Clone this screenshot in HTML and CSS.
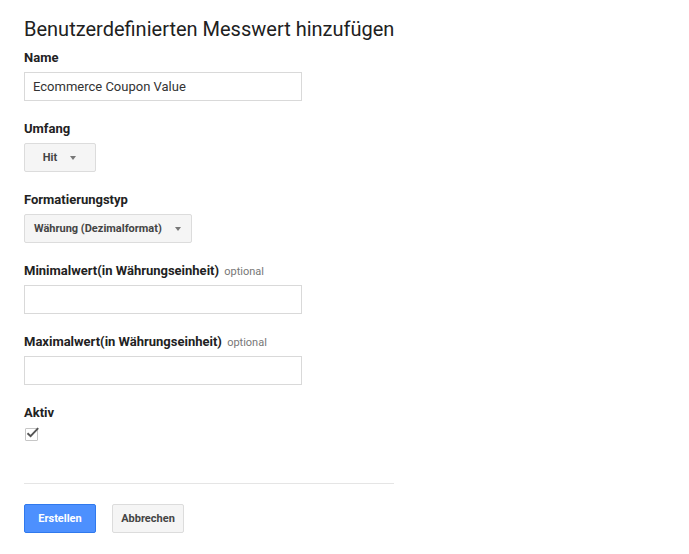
FILE: index.html
```html
<!DOCTYPE html>
<html lang="de">
<head>
<meta charset="utf-8">
<title>Benutzerdefinierten Messwert hinzufügen</title>
<link rel="stylesheet" href="styles.css">
</head>
<body>
<div class="page">
  <h1 class="title">Benutzerdefinierten Messwert hinzufügen</h1>

  <div class="field">
    <div class="label">Name</div>
    <div class="input">Ecommerce Coupon Value</div>
  </div>

  <div class="field">
    <div class="label">Umfang</div>
    <div class="select"><span>Hit</span><span class="arrow"></span></div>
  </div>

  <div class="field">
    <div class="label">Formatierungstyp</div>
    <div class="select"><span>Währung (Dezimalformat)</span><span class="arrow"></span></div>
  </div>

  <div class="field">
    <div class="label">Minimalwert(in Währungseinheit) <span class="optional">optional</span></div>
    <div class="input"></div>
  </div>

  <div class="field">
    <div class="label">Maximalwert(in Währungseinheit) <span class="optional">optional</span></div>
    <div class="input"></div>
  </div>

  <div class="field field-last">
    <div class="label">Aktiv</div>
    <div class="checkbox">
      <svg width="16" height="16" viewBox="0 0 16 16" class="check">
        <path d="M2.5 8.2 L5.6 11.2 L13.2 3.2" fill="none" stroke="#555" stroke-width="1.9"/>
      </svg>
    </div>
  </div>

  <div class="divider"></div>

  <div class="actions">
    <div class="btn btn-primary">Erstellen</div>
    <div class="btn">Abbrechen</div>
  </div>
</div>
</body>
</html>
```

FILE: styles.css
```css
html, body {
  margin: 0;
  padding: 0;
  background: #ffffff;
}

body {
  font-family: Roboto, "Liberation Sans", Arial, sans-serif;
  color: #222222;
}

.page {
  padding: 17px 0 0 24px;
}

.title {
  margin: 0 0 9px 0;
  font-size: 20px;
  line-height: 24px;
  font-weight: 400;
  color: #212121;
}

.field {
  margin-bottom: 20px;
}

.label {
  font-size: 13px;
  line-height: 16px;
  font-weight: 700;
  color: #222222;
  margin-bottom: 6px;
}

.optional {
  font-size: 11px;
  line-height: 1;
  font-weight: 400;
  color: #777777;
  margin-left: 2px;
}

.input {
  box-sizing: border-box;
  width: 278px;
  height: 29px;
  border: 1px solid #d9d9d9;
  padding: 0 8px;
  font-size: 13px;
  line-height: 27px;
  color: #333333;
}

.select {
  box-sizing: border-box;
  display: inline-flex;
  align-items: center;
  justify-content: center;
  min-width: 72px;
  height: 29px;
  padding: 0 10px 0 9px;
  background: #f5f5f5;
  border: 1px solid #dcdcdc;
  border-radius: 2px;
  font-size: 11px;
  font-weight: 700;
  color: #444444;
}

.arrow {
  display: inline-block;
  width: 0;
  height: 0;
  margin-left: 13px;
  border-left: 3px solid transparent;
  border-right: 3px solid transparent;
  border-top: 4px solid #777777;
}

.field-last {
  margin-bottom: 0;
}

.checkbox {
  position: relative;
  box-sizing: border-box;
  width: 13px;
  height: 13px;
  margin-left: 1px;
  margin-top: 7px;
  border: 1px solid #c6c6c6;
  border-radius: 1px;
  background: #ffffff;
}

.check {
  position: absolute;
  left: -1px;
  top: -4px;
}

.divider {
  width: 370px;
  height: 1px;
  background: #e5e5e5;
  margin-top: 42px;
}

.actions {
  display: flex;
  gap: 16px;
  margin-top: 20px;
}

.btn {
  box-sizing: border-box;
  min-width: 72px;
  height: 29px;
  padding: 0 8px;
  display: flex;
  align-items: center;
  justify-content: center;
  background: #f5f5f5;
  border: 1px solid #dcdcdc;
  border-radius: 2px;
  font-size: 11px;
  font-weight: 700;
  color: #444444;
}

.btn-primary {
  background: #4d90fe;
  border-color: #3079ed;
  color: #ffffff;
}
```
